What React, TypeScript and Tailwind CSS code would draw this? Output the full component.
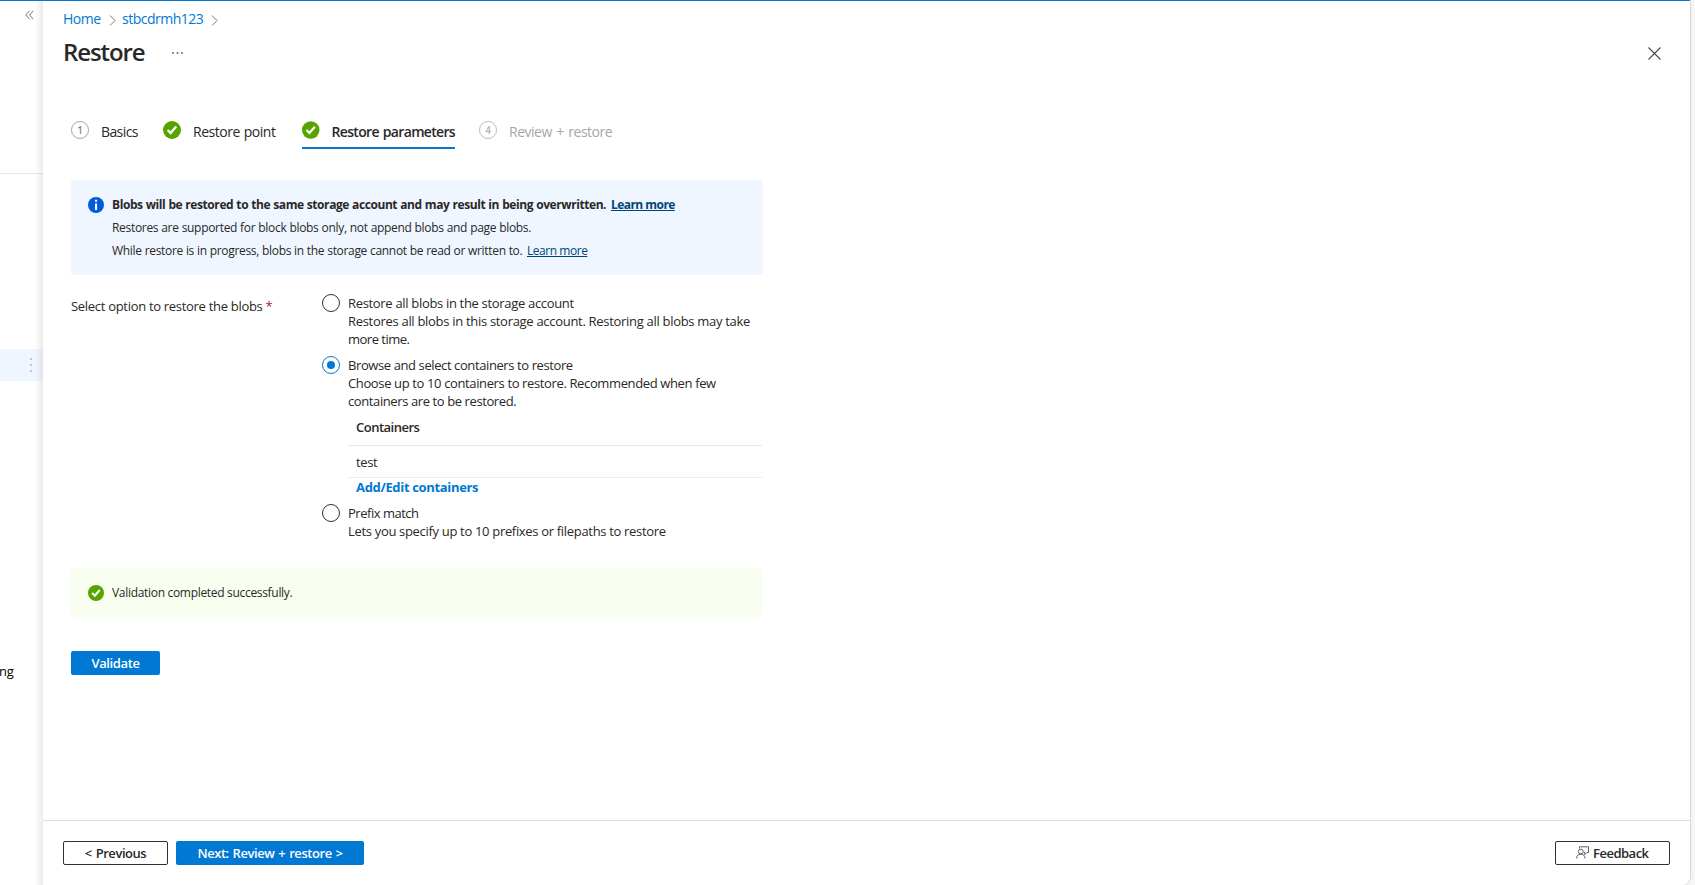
import type { ReactNode } from "react";

function Chevron() {
  return (
    <svg className="mt-[6px] h-[11px] w-[7px]" viewBox="0 0 7 11" fill="none" stroke="#767676">
      <path d="M1 0.5l5 5-5 5" />
    </svg>
  );
}

function CheckCircle({ className }: { className: string }) {
  return (
    <svg className={className} viewBox="0 0 18 18">
      <circle cx="9" cy="9" r="9" fill="#57a300" />
      <path d="M4.6 9l3 3L13.2 5.6" fill="none" stroke="#fff" strokeWidth="2.3" />
    </svg>
  );
}

function StepNumber({ n, className }: { n: number; className: string }) {
  return (
    <span
      className={`mt-[9px] flex h-[18px] w-[18px] shrink-0 items-center justify-center rounded-full border text-[10px] leading-[16px] font-semibold ${className}`}
    >
      {n}
    </span>
  );
}

function Option({
  label,
  selected,
  children,
}: {
  label: ReactNode;
  selected?: boolean;
  children: ReactNode;
}) {
  return (
    <div className="flex">
      <span
        className={`flex h-[18px] w-[18px] shrink-0 items-center justify-center rounded-full border ${
          selected ? "border-[#0078d4]" : "border-[#323130]"
        }`}
      >
        {selected && <span className="h-2 w-2 rounded-full bg-[#0078d4]" />}
      </span>
      <div className="ml-2 w-[414px]">
        <div>{label}</div>
        {children}
      </div>
    </div>
  );
}

export default function App() {
  return (
    <div className="flex h-[885px] w-[1695px] overflow-hidden bg-[#f6f6f6] font-['Open_Sans','Noto_Sans',sans-serif] text-[13px] leading-[18px] whitespace-nowrap text-[#292827]">
      <aside className="relative flex w-[43px] shrink-0 flex-col border-t border-[#0078d4] bg-white">
        <svg className="mt-[9px] ml-[25px] h-[10px] w-[9px]" viewBox="0 0 9 10" fill="none" stroke="#767676">
          <path d="M4.5 0.8L0.8 5l3.7 4.2M8.3 0.8L4.6 5l3.7 4.2" />
        </svg>
        <div className="mt-[153px] h-px bg-[#e6e6e6]" />
        <div className="mt-[175px] flex h-8 flex-col items-start gap-1 bg-[#eff6ff] pt-[9px] pl-[30px]">
          <span className="h-0.5 w-0.5 bg-[#c4c4c4]" />
          <span className="h-0.5 w-0.5 bg-[#c4c4c4]" />
          <span className="h-0.5 w-0.5 bg-[#c4c4c4]" />
        </div>
        <div className="mt-[281px] -ml-px text-[13px] tracking-[-0.3px] text-black">ng</div>
        <div className="absolute top-0 right-0 bottom-0 w-[8px] bg-linear-to-r from-transparent to-black/8" />
      </aside>

      <main className="flex w-[1647px] shrink-0 flex-col rounded-br-lg border-t border-t-[#0078d4] bg-white shadow-[1px_0_1px_#d6d6d6]">
        <header className="h-[119px] pl-5">
          <nav className="flex h-[20px] pt-[8px] text-[14px] leading-[20px] text-[#0078d4]">
            <span className="w-[46px] tracking-[-0.5px]">Home</span>
            <Chevron />
            <span className="ml-[6px] w-[89px] tracking-[-0.5px]">stbcdrmh123</span>
            <Chevron />
          </nav>
          <div className="flex pt-[15px]">
            <h1 className="w-[109px] pt-[1px] text-[24px] leading-[30px] font-semibold tracking-[-1.1px]">Restore</h1>
            <svg className="mt-[16px] h-[2px] w-[11px]" viewBox="0 0 11 2" fill="#605e5c">
              <circle cx="1" cy="1" r="0.9" />
              <circle cx="5.5" cy="1" r="0.9" />
              <circle cx="10" cy="1" r="0.9" />
            </svg>
            <svg className="mt-[11px] mr-[29px] ml-auto h-[13px] w-[13px]" viewBox="0 0 13 13" stroke="#4a4a4a" strokeWidth="1.1">
              <path d="M0.5 0.5l12 12M12.5 0.5l-12 12" />
            </svg>
          </div>
        </header>

        <section className="flex grow flex-col pl-7">
          <div className="-mt-[8px] flex h-[37px] text-[14px] leading-[40px]">
            <StepNumber n={1} className="border-[#a6a6a6] text-[#8a8a8a]" />
            <span className="ml-3 w-[62px] tracking-[-0.6px]">Basics</span>
            <CheckCircle className="mt-[9px] h-[18px] w-[18px]" />
            <span className="ml-3 w-[109px] tracking-[-0.48px] [word-spacing:0.8px]">Restore point</span>
            <div className="flex h-[37px] w-[153px] border-b-2 border-[#0078d4]">
              <CheckCircle className="mt-[9px] h-[18px] w-[18px]" />
              <span className="ml-3 font-semibold tracking-[-0.67px] [word-spacing:1px]">Restore parameters</span>
            </div>
            <div className="ml-6 flex text-[#a8a6a4]">
              <StepNumber n={4} className="border-[#bebebe] text-[#b0b0b0]" />
              <span className="ml-3 tracking-[-0.5px] [word-spacing:1.4px]">Review + restore</span>
            </div>
          </div>

          <div className="mt-[31px] flex h-[95px] w-[692px] rounded-xs bg-[#eff6ff] pt-[13px] pl-[17px] text-[12px] leading-[23px]">
            <svg className="mt-1 h-4 w-4" viewBox="0 0 16 16">
              <circle cx="8" cy="8" r="8" fill="#015cda" />
              <path d="M7 6.4h2.1V13H7zM7 2.8h2.1v2H7z" fill="#fff" />
            </svg>
            <div className="ml-2">
              <div className="font-bold">
                <span className="inline-block w-[499px] tracking-[-0.42px] [word-spacing:0.4px]">
                  Blobs will be restored to the same storage account and may result in being overwritten.
                </span>
                <a className="tracking-[-0.55px] text-[#004578] underline">Learn more</a>
              </div>
              <div className="tracking-[-0.31px] [word-spacing:0.2px]">
                Restores are supported for block blobs only, not append blobs and page blobs.
              </div>
              <div>
                <span className="inline-block w-[415px] tracking-[-0.32px] [word-spacing:0.2px]">
                  While restore is in progress, blobs in the storage cannot be read or written to.
                </span>
                <a className="tracking-[-0.46px] text-[#004578] underline">Learn more</a>
              </div>
            </div>
          </div>

          <div className="mt-[19px] flex">
            <div className="w-[251px] pt-[3px] tracking-[-0.3px]">
              Select option to restore the blobs <span className="text-[#a4262c]">*</span>
            </div>
            <div className="flex flex-col gap-2">
              <Option label={<span className="tracking-[-0.32px]">Restore all blobs in the storage account</span>}>
                <div className="tracking-[-0.3px]">
                  Restores all blobs in this storage account. Restoring all blobs may take
                </div>
                <div className="tracking-[-0.5px]">more time.</div>
              </Option>
              <Option
                selected
                label={<span className="tracking-[-0.4px]">Browse and select containers to restore</span>}
              >
                <div className="tracking-[-0.37px]">Choose up to 10 containers to restore. Recommended when few</div>
                <div className="tracking-[-0.4px]">containers are to be restored.</div>
                <div className="h-9 border-b border-[#e6e6e6] pl-2 leading-[35px] font-semibold tracking-[-0.5px]">
                  Containers
                </div>
                <div className="h-8 border-b border-[#ededed] pl-2 leading-[32px] tracking-[-0.35px]">test</div>
                <div className="pl-2 font-bold tracking-[-0.34px] text-[#0078d4]">Add/Edit containers</div>
              </Option>
              <Option label={<span className="tracking-[-0.48px]">Prefix match</span>}>
                <div className="tracking-[-0.32px]">Lets you specify up to 10 prefixes or filepaths to restore</div>
              </Option>
            </div>
          </div>

          <div className="mt-[28px] flex h-[49px] w-[692px] items-center rounded-xs bg-[#f8fff0] pl-[17px] text-[12px]">
            <CheckCircle className="h-4 w-4" />
            <span className="ml-2 pt-px tracking-[-0.31px]">Validation completed successfully.</span>
          </div>

          <button className="mt-[34px] h-6 w-[89px] rounded-xs bg-[#0078d4] pb-px font-semibold tracking-[-0.4px] text-white">
            Validate
          </button>
        </section>

        <footer className="flex h-[65px] border-t border-[#dcdcdc] pt-5 pr-5 pl-5 font-semibold">
          <button className="h-6 w-[105px] rounded-xs border border-[#323130] tracking-[-0.45px] [word-spacing:1px]">
            &lt; Previous
          </button>
          <button className="ml-2 h-6 w-[188px] rounded-xs bg-[#0078d4] tracking-[-0.45px] [word-spacing:1px] text-white">
            Next: Review + restore &gt;
          </button>
          <button className="ml-auto flex h-6 w-[115px] items-center rounded-xs border border-[#323130] pl-5">
            <svg className="mb-0.5 h-[13px] w-[13px]" viewBox="0 0 13 13" fill="none" stroke="#4a4a4a" strokeWidth="0.9">
              <path d="M3.5 2.5V0.8h9v5.7h-1.6L8.8 8.6V6.5H8" />
              <circle cx="4.8" cy="5.6" r="2.4" />
              <path d="M0.6 12.4c0-2.6 1.8-4.3 4.2-4.3S9 9.8 9 12.4" />
            </svg>
            <span className="ml-[4px] tracking-[-0.5px]">Feedback</span>
          </button>
        </footer>
      </main>
    </div>
  );
}
